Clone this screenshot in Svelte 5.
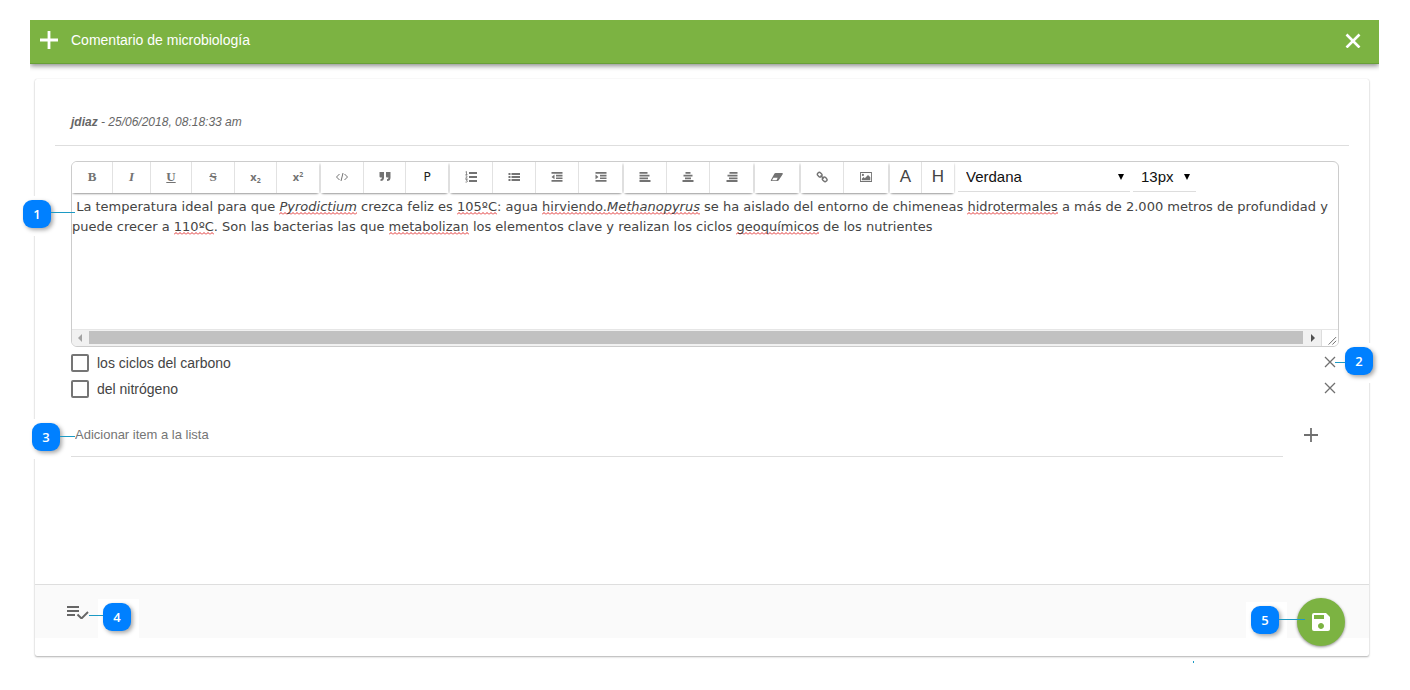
<script>
  let items = $state([
    { id: 'item-1', text: 'los ciclos del carbono', done: false },
    { id: 'item-2', text: 'del nitrógeno', done: false }
  ]);
  let draft = $state('');
  let family = $state('Verdana');
  let size = $state('13px');

  function addItem() {
    if (!draft.trim()) return;
    items.push({ id: 'item-' + Date.now(), text: draft.trim(), done: false });
    draft = '';
  }
  function removeItem(id) {
    items = items.filter((i) => i.id !== id);
  }

  const groups = [
    ['bold', 'italic', 'underline', 'strike', 'sub', 'sup'],
    ['code', 'quote', 'paragraph'],
    ['ordered', 'unordered', 'outdent', 'indent'],
    ['left', 'center', 'right'],
    ['clear'],
    ['link', 'image'],
    ['color', 'highlight']
  ];
</script>

{#snippet note(n, side)}
  <span class="note {side}"><i class="lead"></i><b class="pin">{n}</b></span>
{/snippet}

{#snippet glyph(name)}
  {#if name === 'bold'}<span class="serif"><b>B</b></span>
  {:else if name === 'italic'}<span class="serif"><b><i>I</i></b></span>
  {:else if name === 'underline'}<span class="serif"><u>U</u></span>
  {:else if name === 'strike'}<span class="serif"><s>S</s></span>
  {:else if name === 'sub'}<span class="script">x<small class="low">2</small></span>
  {:else if name === 'sup'}<span class="script">x<small class="high">2</small></span>
  {:else if name === 'paragraph'}<span class="para">P</span>
  {:else if name === 'color'}<span class="big">A</span>
  {:else if name === 'highlight'}<span class="big">H</span>
  {:else}
    <svg width="14" height="12" viewBox="0 0 14 12" fill="currentColor" aria-hidden="true">
      {#if name === 'code'}
        <path d="M4.500 3 1.500 6l3 3M9.500 3l3 3-3 3M8 2 6 10" fill="none" stroke="currentColor" stroke-width="1" />
      {:else if name === 'quote'}
        <path d="M1.500 1h4.500v5.500Q6 10 2.500 10V8.300Q4 8.300 4 6.500H2.500q-1 0-1-1zM8 1h4.500v5.500q0 3.500-3.500 3.500V8.300q1.500 0 1.500-1.800H9q-1 0-1-1z" />
      {:else if name === 'ordered'}
        <path d="M5 1h8v2H5zM5 5h8v2H5zM5 9h8v2H5z" />
        <path d="M1.500 1 2.500.5V3.500M1.500 3.500h2M1.500 4.800h1.500v1L1.500 7.200h2M1.500 8.500h1.800L2.500 9.500q1 0 1 .8 0 1-2 .8" fill="none" stroke="currentColor" stroke-width=".8" />
      {:else if name === 'unordered'}
        <path d="M4.500 2h8.500v2H4.500zM4.500 5h8.500v2H4.500zM4.500 8h8.500v2H4.500zM1.500 2h2v2h-2zM1.500 5h2v2h-2zM1.500 8h2v2h-2z" />
      {:else if name === 'outdent'}
        <path d="M1.500 1h11v1.700h-11zM6 3.700h6.500v1.700H6zM6 6.400h6.500v1.700H6zM1.500 9.100h11v1.700h-11zM4.500 3.500v4.800L1.500 5.900z" />
      {:else if name === 'indent'}
        <path d="M1.500 1h11v1.700h-11zM6 3.700h6.500v1.700H6zM6 6.400h6.500v1.700H6zM1.500 9.100h11v1.700h-11zM1.500 3.500v4.800L4.500 5.900z" />
      {:else if name === 'left'}
        <path d="M1.500 1h8v1.800h-8zM1.500 3.700h10v1.800h-10zM1.500 6.400h8.500v1.800H1.500zM1.500 9.100h11v1.800h-11z" />
      {:else if name === 'center'}
        <path d="M4.500 1h5v1.800h-5zM2.500 3.700h9v1.800h-9zM4 6.400h6v1.800H4zM1.500 9.100h11v1.800h-11z" />
      {:else if name === 'right'}
        <path d="M4.500 1h8v1.800h-8zM2.500 3.700h10v1.800h-10zM4 6.400h8.500v1.800H4zM1.500 9.100h11v1.800h-11z" />
      {:else if name === 'clear'}
        <path fill-rule="evenodd" d="M5.600 2h6.400q1.300 0 .7 1.200L8.700 9.300q-.4.700-1.200.7H1.500Q.3 10 .9 8.900L4.500 2.600Q4.900 2 5.600 2zM3.500 6.700h4.200L6.500 9.200H2z" />
      {:else if name === 'link'}
        <g fill="none" stroke="currentColor" stroke-width="1.400">
          <rect x="2.300" y="1.800" width="4.800" height="3.800" rx="1.800" transform="rotate(45 4.700 3.700)" />
          <rect x="7.300" y="6.400" width="4.800" height="3.800" rx="1.800" transform="rotate(45 9.700 8.300)" />
          <path d="m5.500 4.500 3.300 3" />
        </g>
      {:else if name === 'image'}
        <path fill-rule="evenodd" d="M1.500 1h11q.5 0 .5.500v9q0 .5-.5.500h-11q-.5 0-.5-.5v-9q0-.5.500-.5zM1.900 1.900v8.200h10.200V1.900z" />
        <path d="M2.800 9.300V7.800L4.600 6l1.200 1.200 3.200-3.200 2.300 2.300v3zM5 3.900a1.100 1.100 0 1 1-2.200 0 1.100 1.100 0 0 1 2.200 0z" />
      {/if}
    </svg>
  {/if}
{/snippet}

<div class="page">
  <header>
    <svg width="18" height="18" viewBox="0 0 18 18" aria-hidden="true"><path d="M9 0v18M0 9h18" stroke="#fff" stroke-width="2.800" /></svg>
    <h1>Comentario de microbiología</h1>
    <button class="plain" aria-label="Cerrar">
      <svg width="16" height="16" viewBox="0 0 16 16"><path d="m1.500 2.500 13 13M14.500 2.500l-13 13" stroke="#fff" stroke-width="2.600" /></svg>
    </button>
  </header>

  <main>
    <p class="meta"><b>jdiaz</b> - 25/06/2018, 08:18:33 am</p>

    <section class="body">
      <div class="anchor">
        {@render note(1, 'before one')}
        <div class="editor">
          <div class="toolbar">
            {#each groups as group}
              <div class="group">
                {#each group as name}
                  <button class="tool {name}" aria-label={name}>{@render glyph(name)}</button>
                {/each}
              </div>
            {/each}
            <div class="pick font">
              <select aria-label="Fuente" bind:value={family}><option>Verdana</option><option>Arial</option></select>
              <svg width="6" height="7" viewBox="0 0 6 7"><path d="M0 0h6L3 6z" /></svg>
            </div>
            <div class="pick size">
              <select aria-label="Tamaño" bind:value={size}><option>13px</option><option>16px</option></select>
              <svg width="6" height="7" viewBox="0 0 6 7"><path d="M0 0h6L3 6z" /></svg>
            </div>
          </div>
          <div class="text" contenteditable="true" role="textbox" tabindex="0" aria-label="Comentario" spellcheck="false">&nbsp;La temperatura ideal para que <em class="w">Pyrodictium</em> crezca feliz es <span class="w">105ºC</span>: agua <span class="w">hirviendo.</span><em class="w">Methanopyrus</em> se ha aislado del entorno de chimeneas <span class="w">hidrotermales</span> a más de 2.000 metros de profundidad y puede crecer a <span class="w">110ºC</span>. Son las bacterias las que <span class="w">metabolizan</span> los elementos clave y realizan los ciclos <span class="w">geoquímicos</span> de los nutrientes</div>
          <div class="scroll" aria-hidden="true">
            <svg width="17" height="16" viewBox="0 0 17 16"><path d="M10 4v8L6 8z" fill="#a3a3a3" /></svg>
            <span class="thumb"></span>
            <svg width="18" height="16" viewBox="0 0 18 16"><path d="M8 4v8l4-4z" fill="#505050" /></svg>
            <svg class="grip" width="17" height="16" viewBox="0 0 17 16"><path d="m7 15 8-8M11 15l4-4" stroke="#666" /></svg>
          </div>
        </div>
      </div>

      <ul>
        {#each items as item, i (item.id)}
          <li>
            <input type="checkbox" id={item.id} bind:checked={item.done} />
            <label for={item.id}>{item.text}</label>
            <button class="plain" aria-label="Quitar" onclick={() => removeItem(item.id)}>
              <svg width="12" height="14" viewBox="0 0 12 14"><path d="m1 1 10 10M11 1 1 11" stroke="#707070" stroke-width="1.300" /></svg>
            </button>
            {#if i === 0}{@render note(2, 'after two')}{/if}
          </li>
        {/each}
      </ul>

      <div class="add">
        {@render note(3, 'before three')}
        <input type="text" aria-label="Adicionar item a la lista" placeholder="Adicionar item a la lista" bind:value={draft} />
        <button class="plain" aria-label="Adicionar" onclick={addItem}>
          <svg width="14" height="14" viewBox="0 0 14 14"><path d="M7 0v14M0 7h14" stroke="#707070" stroke-width="1.800" /></svg>
        </button>
      </div>
    </section>

    <footer>
      <div class="anchor">
        <button class="plain" aria-label="Lista">
          <svg width="22" height="14" viewBox="0 0 22 14"><path d="M0 2h12M0 6h12M0 10h8M10.500 9.500l4 4L21 7" fill="none" stroke="#666" stroke-width="1.900" /></svg>
        </button>
        {@render note(4, 'after four')}
      </div>
      <div class="anchor save">
        <button class="fab" aria-label="Guardar">
          <svg width="24" height="24" viewBox="0 0 24 24"><path fill="#fff" d="M17 3H5a2 2 0 0 0-2 2v14a2 2 0 0 0 2 2h14c1.100 0 2-.9 2-2V7l-4-4zm-5 16c-1.660 0-3-1.340-3-3s1.340-3 3-3 3 1.340 3 3-1.340 3-3 3zm3-10H5V5h10v4z" /></svg>
        </button>
        {@render note(5, 'before five')}
      </div>
    </footer>
    <span class="tick"></span>
  </main>
</div>

<style>
  :global(body) { margin: 0; background: #fff; }
  .page, .page * { box-sizing: border-box; }
  .page { padding: 20px 31px 32px 30px; font-family: "Liberation Sans", Arial, sans-serif; color: #444; }
  button { font: inherit; cursor: pointer; }
  svg { display: block; flex: none; }
  .plain { display: flex; align-items: center; justify-content: center; padding: 0; border: 0; background: none; }

  header { display: flex; align-items: center; height: 44px; padding: 0 18px 4px 10px; background: #7cb342; border-bottom: 1px solid #689f38; box-shadow: 0 2px 5px rgba(0, 0, 0, .45); clip-path: inset(0 0 -12px 0); }
  h1 { flex: 1; margin: 0 0 0 13px; font-size: 14px; font-weight: 400; line-height: 20px; color: #fff; }

  main { position: relative; margin: 15px 10px 0 5px; padding-bottom: 18px; background: #fff; border-radius: 2px; box-shadow: 0 1px 2px rgba(0, 0, 0, .3), 0 0 1px rgba(0, 0, 0, .15); }
  .meta { margin: 0 20px; padding: 34px 16px 14px; font-size: 12px; line-height: 18px; font-style: italic; color: #666; border-bottom: 1px solid #dedede; }
  .body { padding: 15px 30px 0 36px; min-height: 438px; }
  .anchor { position: relative; }

  .editor { border: 1px solid #ccc; border-radius: 6px; overflow: hidden; }
  .toolbar { display: flex; height: 35px; gap: 2px; }
  .group { display: flex; height: 31px; border-radius: 3px; box-shadow: 0 1px 2px rgba(0, 0, 0, .4); }
  .tool { display: flex; align-items: center; justify-content: center; width: 43px; padding: 0 0 2px; border: 0; border-right: 1px solid #e2e2e2; background: #fff; color: #737373; }
  .tool:last-child { border-right: 0; }
  .bold, .underline { width: 41px; }
  .italic { width: 38px; }
  .sub, .sup, .quote, .paragraph { width: 42px; }
  .clear, .image { width: 44px; }
  .color, .highlight { width: 32px; }
  .serif { font: 700 13px/16px "Liberation Serif", serif; }
  .script { font: 700 11px/16px "Open Sans", sans-serif; }
  .script small { font-size: 7px; line-height: 1px; }
  .low { vertical-align: -2px; }
  .high { vertical-align: 4px; }
  .para { font: 12px/16px "DejaVu Sans", sans-serif; color: #222; }
  .big { font: 17px/20px "Liberation Sans", sans-serif; color: #444; }
  .pick { position: relative; height: 30px; border-bottom: 1px solid #ddd; }
  .font { width: 172px; margin-left: 2px; }
  .size { width: 63px; margin-left: 1px; }
  .pick select { appearance: none; width: 100%; height: 29px; padding: 0 8px; border: 0; background: none; font: 15px/20px "Liberation Sans", Arial, sans-serif; color: #111; }
  .pick svg { position: absolute; right: 6px; top: 12px; pointer-events: none; }

  .text { height: 132px; font: 13px/20px Verdana, "DejaVu Sans", sans-serif; color: #444; outline: 0; }
  .w { padding-bottom: 1px; background: url("data:image/svg+xml,%3Csvg xmlns='http://www.w3.org/2000/svg' width='4' height='3'%3E%3Cpath d='M0 2.500 2 .5l2 2' fill='none' stroke='%23e03030'/%3E%3C/svg%3E") repeat-x 0 100%; }
  .scroll { display: flex; height: 17px; background: #f1f1f1; border-top: 1px solid #e6e6e6; }
  .thumb { flex: 1; margin: 1px 0 2px; background: #c1c1c1; }
  .grip { background: #fff; border-left: 1px solid #ddd; }

  ul { margin: 3px 0 0; padding: 0; list-style: none; }
  li { position: relative; display: flex; align-items: center; height: 26px; padding-right: 3px; font-size: 14px; }
  li label { flex: 1; margin-left: 8px; }
  input[type="checkbox"] { appearance: none; width: 18px; height: 18px; margin: 0; border: 2px solid #757575; border-radius: 2px; }
  input[type="checkbox"]:checked { background: #7cb342; }

  .add { position: relative; display: flex; align-items: center; gap: 21px; margin-top: 11px; padding-right: 21px; }
  .add input { flex: 1; height: 44px; padding: 0 4px; border: 0; border-bottom: 1px solid #dedede; background: none; font: 13px/20px "Liberation Sans", Arial, sans-serif; outline: 0; }
  .add input::placeholder { color: #757575; opacity: 1; }

  footer { display: flex; justify-content: space-between; height: 54px; padding: 0 24px 0 32px; background: #fafafa; border-top: 1px solid #dedede; }
  footer .anchor { height: 54px; padding-top: 20px; }
  footer .save { padding-top: 13px; }
  .fab { display: flex; align-items: center; justify-content: center; width: 48px; height: 48px; padding: 0; border: 0; border-radius: 50%; background: #7cb342; box-shadow: 0 1px 3px rgba(0, 0, 0, .45); }

  .note { position: absolute; z-index: 2; display: flex; width: 41px; height: 40px; padding: 4px 5px; background: #fff; pointer-events: none; }
  .pin { width: 28px; height: 28px; border-radius: 9px; background: #0080ff; box-shadow: 2px 2px 4px rgba(0, 0, 0, .35); color: #fff; font: 600 13px/28px "Open Sans", sans-serif; text-align: center; }
  .lead { position: absolute; height: 1px; width: 24px; background: #1c9ac4; }
  .before .lead { left: 33px; top: 16px; }
  .after .lead { right: 36px; top: 19px; }
  .one { left: -53px; top: 35px; }
  .two { right: -42px; top: -7px; }
  .two .lead { width: 10px; }
  .three { left: -44px; top: 6px; }
  .three .lead { width: 15px; top: 17px; }
  .four { left: 31px; top: 14px; }
  .four .lead { width: 14px; top: 16px; }
  .five { left: -51px; top: 17px; }
  .five .lead { width: 26px; top: 17px; }
  .tick { position: absolute; right: 175px; bottom: -7px; width: 1px; height: 2px; background: #1c9ac4; }
</style>
